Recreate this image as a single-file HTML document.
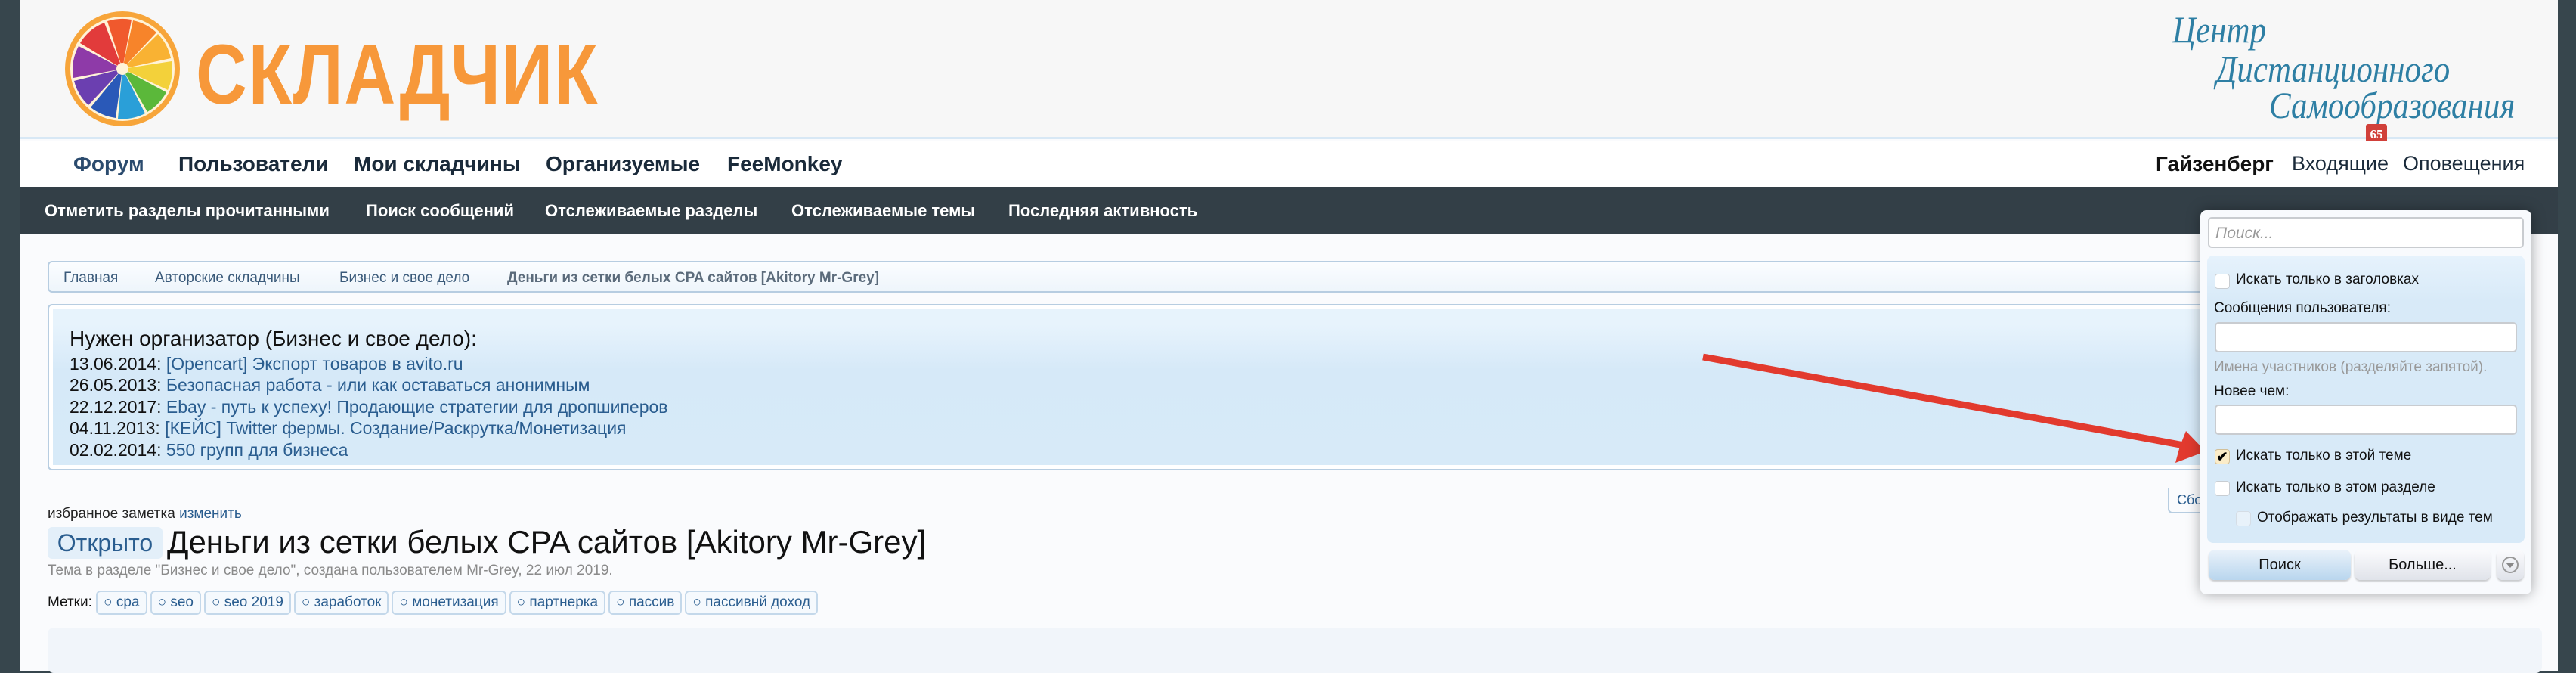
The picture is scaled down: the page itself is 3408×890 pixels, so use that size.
<!DOCTYPE html>
<html><head><meta charset="utf-8"><style>
*{margin:0;padding:0;box-sizing:border-box}
body{width:3408px;height:887px;overflow:hidden;background:#37464d;font-family:"Liberation Sans","Noto Sans CJK SC",sans-serif;position:relative}
.abs{position:absolute}
#wrap{position:absolute;left:27px;top:0;width:3357px;height:887px;background:#fafbfd}
#hdr{position:absolute;left:0;top:0;width:3357px;height:184px;background:#f7f7f7;border-bottom:3px solid #d8e8f5}
#nav{position:absolute;left:0;top:187px;width:3357px;height:60px;background:#fff}
#nav span{position:absolute;top:14px;font-size:28px;font-weight:bold;color:#1a2a3a}
#bar{position:absolute;left:0;top:247px;width:3357px;height:63px;background:#333f47}
#bar span{position:absolute;top:19px;font-size:22px;font-weight:bold;color:#fff}
.logo{font-family:"Liberation Sans",sans-serif;font-weight:bold;color:#f7983a;font-size:112px;letter-spacing:2px;transform:scaleX(0.84);transform-origin:left}
.ital{font-family:"Liberation Serif",serif;font-style:italic;color:#2e7fa4;font-size:50px;line-height:1;transform:scaleX(0.86);transform-origin:left}
.bc{position:absolute;left:36px;top:345px;width:2990px;height:42px;border:2px solid #b7cde1;border-radius:6px;background:linear-gradient(#fbfdff,#eef5fb);font-size:19px;color:#3a5a7a}
.bc span{position:absolute;top:10px}
.note{position:absolute;left:36px;top:402px;width:2900px;height:220px;border:2px solid #b7cde1;border-radius:6px;background:#fff;padding:5px}
.note .in{width:100%;height:100%;background:linear-gradient(#e7f3fc 20px,#d6e9f8 80px,#d7eaf8);padding:25px 22px 0;font-size:23px;color:#111;line-height:28.5px}
.note a{color:#2a5d8f;text-decoration:none}
.tag{display:inline-block;font-size:19px;color:#2a5d8f;border:2px solid #c4d8ea;border-radius:6px;padding:3px 8px;margin-right:4px;background:#f5f9fd}
#pop{position:absolute;left:2911px;top:278px;width:438px;height:508px;background:#f8fafd;border-radius:8px;box-shadow:0 0 18px rgba(0,0,0,.35)}
.inp{position:absolute;background:#fff;border:2px solid #c9ccd0;border-radius:5px}
.pl{position:absolute;font-size:19px;color:#111}
.cb{position:absolute;width:20px;height:20px;border:1px solid #c8cdd2;border-radius:4px;background:#fff}
.btn{position:absolute;top:449px;height:40px;border-radius:8px;font-size:20px;text-align:center;line-height:40px;color:#111;box-shadow:0 2px 2px rgba(0,0,0,.2)}
</style></head><body>
<div id="wrap">
<div id="hdr">
 <svg class="abs" style="left:57px;top:13px" width="156" height="156" viewBox="0 0 156 156">
  <circle cx="78" cy="78" r="76" fill="#f7a53a"/><circle cx="78" cy="78" r="69" fill="#fff3d8"/>
  <g transform="translate(78,78)">
   <path d="M0 0 L-20 -63 A66 66 0 0 1 12 -65Z" fill="#f0592d"/>
   <path d="M0 0 L14 -64 A66 66 0 0 1 45 -48Z" fill="#f7842a"/>
   <path d="M0 0 L47 -46 A66 66 0 0 1 64 -14Z" fill="#f9b233"/>
   <path d="M0 0 L65 -10 A66 66 0 0 1 60 28Z" fill="#f3d13a"/>
   <path d="M0 0 L58 31 A66 66 0 0 1 33 57Z" fill="#5bb83a"/>
   <path d="M0 0 L30 59 A66 66 0 0 1 -6 66Z" fill="#2a9fd8"/>
   <path d="M0 0 L-9 65 A66 66 0 0 1 -42 51Z" fill="#2a59b8"/>
   <path d="M0 0 L-45 48 A66 66 0 0 1 -64 16Z" fill="#6b3fb0"/>
   <path d="M0 0 L-65 12 A66 66 0 0 1 -58 -30Z" fill="#8e3aa8"/>
   <path d="M0 0 L-56 -34 A66 66 0 0 1 -24 -61Z" fill="#e23b3b"/>
   <circle r="8" fill="#fff3d8"/>
  </g>
 </svg>
 <div class="abs logo" style="left:232px;top:34px">СКЛАДЧИК</div>
 <div class="abs ital" style="left:2847px;top:14px">Центр</div>
 <div class="abs ital" style="left:2905px;top:66px">Дистанционного</div>
 <div class="abs ital" style="left:2975px;top:114px">Самообразования</div>
 <div class="abs" style="left:3103px;top:164px;width:28px;height:27px;background:#d1403a;border-radius:3px;color:#fff;font-size:17px;font-weight:bold;text-align:center;line-height:27px;font-family:'Liberation Serif',serif">65</div>
</div>
<div id="nav">
 <span style="left:70px;color:#2b4b6e">Форум</span><span style="left:209px">Пользователи</span><span style="left:441px">Мои складчины</span><span style="left:695px">Организуемые</span><span style="left:935px">FeeMonkey</span>
 <span style="left:2825px;color:#111">Гайзенберг</span><span style="left:3005px;font-weight:normal;font-size:27px">Входящие</span><span style="left:3152px;font-weight:normal;font-size:27px">Оповещения</span>
</div>
<div id="bar">
 <span style="left:32px">Отметить разделы прочитанными</span><span style="left:457px">Поиск сообщений</span><span style="left:694px">Отслеживаемые разделы</span><span style="left:1020px">Отслеживаемые темы</span><span style="left:1307px">Последняя активность</span>
</div>
<div class="bc"><span style="left:19px">Главная</span><span style="left:140px">Авторские складчины</span><span style="left:384px">Бизнес и свое дело</span><span style="left:606px;font-weight:bold;color:#5b6b7b">Деньги из сетки белых CPA сайтов [Akitory Mr-Grey]</span></div>
<div class="note"><div class="in">
 <div style="font-size:28px;margin-bottom:4px">Нужен организатор (Бизнес и свое дело):</div>
 <div>13.06.2014: <a>[Opencart] Экспорт товаров в avito.ru</a></div>
 <div>26.05.2013: <a>Безопасная работа - или как оставаться анонимным</a></div>
 <div>22.12.2017: <a>Ebay - путь к успеху! Продающие стратегии для дропшиперов</a></div>
 <div>04.11.2013: <a>[КЕЙС] Twitter фермы. Создание/Раскрутка/Монетизация</a></div>
 <div>02.02.2014: <a>550 групп для бизнеса</a></div>
</div></div>
<div class="abs" style="left:2841px;top:645px;width:60px;height:34px;border:2px solid #b7cde1;border-top:none;border-radius:0 0 6px 6px;font-size:18px;color:#2a5d8f;padding:6px 10px">Сбо</div>
<div class="abs" style="left:36px;top:669px;font-size:19px;color:#222">избранное заметка <span style="color:#2a5d8f">изменить</span></div>
<div class="abs" style="left:36px;top:697px;width:152px;height:42px;background:#e3eff9;border-radius:6px;color:#2a5d8f;font-size:32px;text-align:center;line-height:42px">Открыто</div>
<div class="abs" style="left:194px;top:693px;font-size:42px;color:#111">Деньги из сетки белых CPA сайтов [Akitory Mr-Grey]</div>
<div class="abs" style="left:36px;top:744px;font-size:19px;color:#8a8a8a">Тема в разделе "Бизнес и свое дело", создана пользователем Mr-Grey, 22 июл 2019.</div>
<div class="abs" style="left:36px;top:781px;font-size:19px;color:#111;white-space:nowrap">Метки: <span class="tag">○ cpa</span><span class="tag">○ seo</span><span class="tag">○ seo 2019</span><span class="tag">○ заработок</span><span class="tag">○ монетизация</span><span class="tag">○ партнерка</span><span class="tag">○ пассив</span><span class="tag">○ пассивнй доход</span></div>
<div class="abs" style="left:36px;top:830px;width:3300px;height:60px;background:#f1f5fa;border-radius:8px"></div>
</div>
<svg class="abs" style="left:0;top:0" width="3408" height="887">
 <line x1="2253" y1="472" x2="2895" y2="590" stroke="#e23a2e" stroke-width="9"/>
 <path d="M2918 597 L2878 612 L2884 590 L2892 570Z" fill="#e23a2e"/>
</svg>
<div id="pop">
 <div class="inp" style="left:10px;top:9px;width:418px;height:41px"><span style="position:absolute;left:8px;top:8px;font-size:21px;font-style:italic;color:#999">Поиск...</span></div>
 <div class="abs" style="left:9px;top:60px;width:420px;height:380px;border-radius:8px;background:linear-gradient(#e6f2fc,#d8eaf8 60px)"></div>
 <div class="cb" style="left:19px;top:84px"></div><div class="pl" style="left:47px;top:81px">Искать только в заголовках</div>
 <div class="pl" style="left:18px;top:119px">Сообщения пользователя:</div>
 <div class="inp" style="left:19px;top:148px;width:400px;height:40px"></div>
 <div class="pl" style="left:18px;top:197px;color:#999">Имена участников (разделяйте запятой).</div>
 <div class="pl" style="left:18px;top:229px">Новее чем:</div>
 <div class="inp" style="left:19px;top:257px;width:400px;height:40px"></div>
 <div class="cb" style="left:19px;top:316px;background:#fbecc8;border-color:#d2bf98;font-size:18px;line-height:18px;text-align:center;font-weight:bold">✔</div><div class="pl" style="left:47px;top:314px">Искать только в этой теме</div>
 <div class="cb" style="left:19px;top:358px"></div><div class="pl" style="left:47px;top:356px">Искать только в этом разделе</div>
 <div class="cb" style="left:47px;top:398px;background:#e8f2fa;border-color:#d5dde5"></div><div class="pl" style="left:75px;top:396px">Отображать результаты в виде тем</div>
 <div class="btn" style="left:11px;width:188px;background:linear-gradient(#eaf2fa,#b9d6ee)">Поиск</div>
 <div class="btn" style="left:204px;width:180px;background:linear-gradient(#fbfbfd,#e0e3ea)">Больше...</div>
 <div class="btn" style="left:392px;width:36px;background:linear-gradient(#fbfbfd,#e0e3ea)"><svg width="36" height="40"><circle cx="18" cy="20" r="10" fill="none" stroke="#999" stroke-width="2"/><path d="M12 17 L24 17 L18 24Z" fill="#888"/></svg></div>
</div>
</body></html>
